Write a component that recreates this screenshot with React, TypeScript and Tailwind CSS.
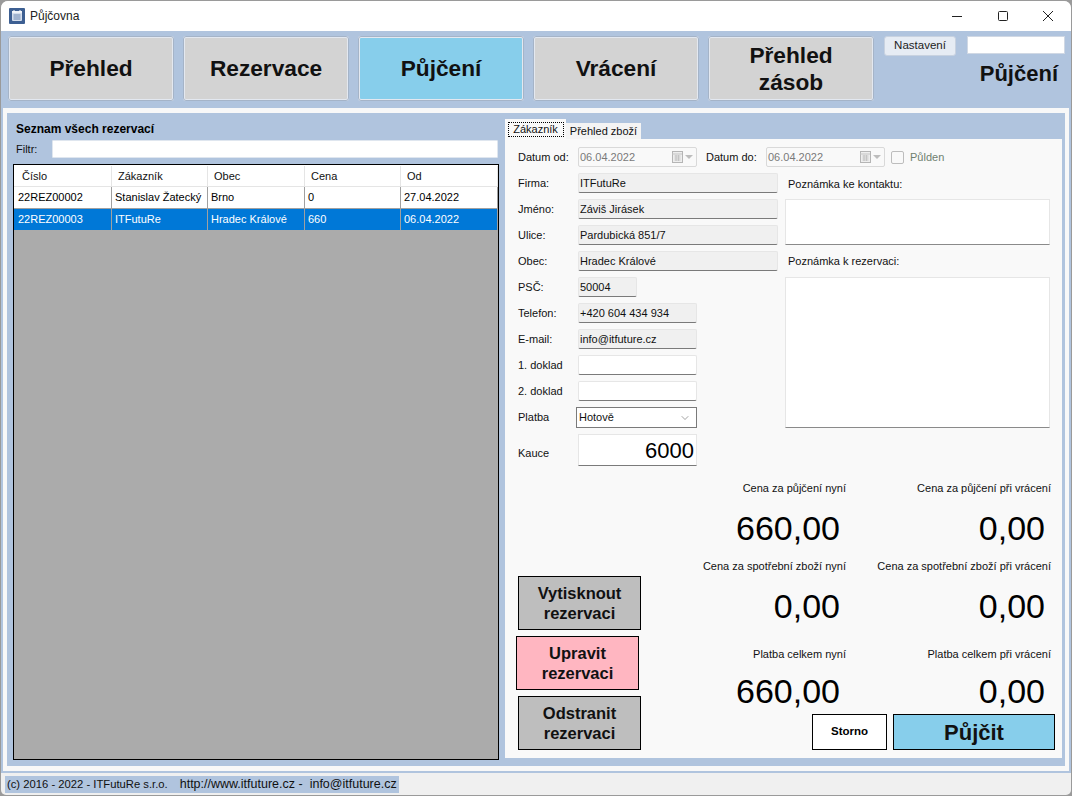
import { ChevronDown } from "lucide-react";

const font = "font-['Liberation_Sans',Arial,sans-serif]";

const navItems = [
  { label: "Přehled" },
  { label: "Rezervace" },
  { label: "Půjčení", active: true },
  { label: "Vrácení" },
  { label: "Přehled zásob" },
];

const columns = ["Číslo", "Zákazník", "Obec", "Cena", "Od"];

const rows = [
  ["22REZ00002", "Stanislav Žatecký", "Brno", "0", "27.04.2022"],
  ["22REZ00003", "ITFutuRe", "Hradec Králové", "660", "06.04.2022"],
];

function CalendarGlyph() {
  return (
    <svg width="24" height="12" viewBox="0 0 24 12" fill="none">
      <rect x="0.5" y="0.5" width="10" height="11" fill="#eeeeee" stroke="#b5b5b5" />
      <path d="M0 3h10M2.500 5h6M2.500 7h6M2.500 9h6M4 4v6M6.500 4v6" stroke="#c4c4c4" />
      <path d="M13 4h8l-4 4z" fill="#bdbdbd" />
    </svg>
  );
}

function DateBox({ value }: { value: string }) {
  return (
    <div className="flex h-5 w-[119px] items-center justify-between rounded-[2px] border border-[#d9d9d9] bg-[#f9f9f9] pl-px text-[#7a7a7a]">
      <span className="pt-px">{value}</span>
      <CalendarGlyph />
    </div>
  );
}

function Field({
  label,
  value,
  width,
  readOnly = true,
}: {
  label: string;
  value?: string;
  width: string;
  readOnly?: boolean;
}) {
  return (
    <div className="flex h-5 items-center">
      <span className="w-[60px] pt-px">{label}</span>
      <div
        className={`flex h-5 items-center rounded-[2px] border border-[#e6e6e6] border-b-[#7a7a7a] pl-px pt-px ${width} ${
          readOnly ? "bg-[#f0f0f0]" : "bg-white"
        }`}
      >
        {value}
      </div>
    </div>
  );
}

function ActionButton({ top, bottom, className }: { top: string; bottom: string; className: string }) {
  return (
    <button className={`flex h-[54px] w-[123px] flex-col items-center justify-center border border-black text-[16.5px] font-bold leading-[20px] text-[#111] ${className}`}>
      <span>{top}</span>
      <span>{bottom}</span>
    </button>
  );
}

function Price({ label, value, valueClass }: { label: string; value: string; valueClass: string }) {
  return (
    <div className="flex flex-col items-end">
      <span className="flex h-5 items-center">{label}</span>
      <span className={`pr-[6px] text-[34px] leading-[40px] text-black ${valueClass}`}>{value}</span>
    </div>
  );
}

export default function App() {
  return (
    <div className={`${font} h-[796px] w-[1072px] overflow-hidden bg-[#9a9a9a] px-px pt-px text-[11px] text-[#111]`}>
      <div className="flex h-[794px] flex-col overflow-hidden rounded-t-[7px] rounded-b-[5px] bg-[#f0f0f0]">
        {/* title bar */}
        <div className="flex h-[30px] shrink-0 items-center bg-white pl-2">
          <svg width="16" height="16" viewBox="0 0 16 16" fill="none">
            <rect width="16" height="16" rx="1" fill="#3d5f92" />
            <rect x="3" y="3" width="10" height="10" rx="1" fill="#d5deec" />
            <path d="M3 3h10v2H3z" fill="#eef2f8" />
            <path d="M4.500 7h7M4.500 9h7M4.500 11h7" stroke="#6d88b2" />
            <path d="M5 2v2M11 2v2" stroke="#ffffff" />
          </svg>
          <span className="ml-[5px] text-[12px] text-[#222]">Půjčovna</span>
          <div className="ml-auto flex items-center pr-[17px]">
            <svg width="12" height="12" viewBox="0 0 12 12" fill="none" className="mr-[34px]">
              <path d="M1 6.500h10" stroke="#222" />
            </svg>
            <svg width="12" height="12" viewBox="0 0 12 12" fill="none" className="mr-[33px]">
              <rect x="1.500" y="1.500" width="9" height="9" rx="1" stroke="#222" />
            </svg>
            <svg width="12" height="12" viewBox="0 0 12 12" fill="none">
              <path d="M1 1l10 10M11 1L1 11" stroke="#222" />
            </svg>
          </div>
        </div>

        {/* top navigation */}
        <div className="flex h-[77px] shrink-0 bg-[#b0c4de] pl-[7px] pt-[5px]">
          <div className="flex gap-[9px]">
            {navItems.map((item) => (
              <button
                key={item.label}
                className={`flex h-[65px] w-[166px] items-center justify-center rounded-[3px] border-2 border-[#e3e8f0] px-8 text-[22.7px] font-bold leading-[27px] text-[#111] outline outline-1 outline-[#a5b4c8] -outline-offset-1 ${
                  item.active ? "bg-[#87ceeb]" : "bg-[#d3d3d3]"
                }`}
              >
                {item.label}
              </button>
            ))}
          </div>
          <div className="ml-[10px] flex flex-col">
            <div className="flex items-start">
              <button className="flex h-5 w-[72px] items-center justify-center rounded-[3px] border border-[#c8d2e0] bg-[#e6ecf4] text-[11.5px] text-[#222]">
                Nastavení
              </button>
              <div className="ml-[11px] h-[18px] w-[98px] border border-[#d0d8e4] bg-white" />
            </div>
            <div className="mt-[5px] self-end pr-[7px] text-[22px] font-bold leading-[26px] text-[#111]">Půjčení</div>
          </div>
        </div>

        {/* main */}
        <div className="shrink-0 bg-[#b0c4de] px-[2px] pb-[2px]">
          <div className="bg-[#f8f8f8] pb-[5px] pl-[4px] pt-[5px]">
            <div className="flex h-[653px] w-[1058px] bg-[#b0c4de]">
              {/* reservations list */}
              <div className="flex w-[498px] shrink-0 flex-col pl-[6px]">
                <div className="flex h-[27px] items-end pb-[2px] pl-[3px] text-[12px] font-bold text-black">
                  Seznam všech rezervací
                </div>
                <div className="flex h-[18px] items-center">
                  <span className="w-[39px] pl-[3px]">Filtr:</span>
                  <div className="h-[18px] w-[446px] rounded-[1px] border border-[#dfe6ef] bg-white" />
                </div>
                <div className="mt-[6px] h-[596px] w-[486px] border border-black bg-[#ababab]">
                  <div className="grid h-[21px] grid-cols-[98px_96px_97px_96px_97px] bg-white pt-px">
                    {columns.map((c) => (
                      <div key={c} className="flex items-center border-r border-[#e5e5e5] pl-[6px] first:pl-2">
                        {c}
                      </div>
                    ))}
                  </div>
                  {rows.map((row, i) => (
                    <div
                      key={row[0]}
                      className={`grid h-[22px] grid-cols-[98px_96px_97px_96px_97px] border-t ${
                        i === 1 ? "border-[#a0a0a0] bg-[#0078d7] text-white" : "border-[#e5e5e5] bg-white text-black"
                      }`}
                    >
                      {row.map((cell) => (
                        <div key={cell} className="flex items-center whitespace-nowrap border-r border-[#a0a0a0] pl-[3px] first:pl-1">
                          {cell}
                        </div>
                      ))}
                    </div>
                  ))}
                </div>
              </div>

              {/* customer tab */}
              <div className="flex w-[557px] shrink-0 flex-col pt-[6px]">
                <div className="flex h-5 items-end">
                  <div className="flex h-5 w-[61px] items-center justify-center bg-[#f9f9f9] pt-px">
                    <span className="flex h-[15px] w-[56px] items-center justify-center border border-dotted border-black">Zákazník</span>
                  </div>
                  <div className="flex h-4 w-[75px] items-center justify-center bg-[#f4f4f4]">Přehled zboží</div>
                </div>
                <div className="h-[619px] bg-[#f9f9f9] pl-[13px] pt-2">
                  <div className="flex h-5 items-center">
                    <span className="w-[60px] pt-px">Datum od:</span>
                    <DateBox value="06.04.2022" />
                    <span className="ml-[9px] w-[60px] pt-px">Datum do:</span>
                    <DateBox value="06.04.2022" />
                    <span className="ml-[6px] h-[13px] w-[13px] rounded-[2px] border border-[#bdbdbd] bg-[#f9f9f9]" />
                    <span className="ml-[6px] pt-px text-[#6f7f6f]">Půlden</span>
                  </div>

                  <div className="mt-[6px] flex">
                    <div className="flex w-[260px] flex-col gap-[6px]">
                      <Field label="Firma:" value="ITFutuRe" width="w-[200px]" />
                      <Field label="Jméno:" value="Záviš Jirásek" width="w-[200px]" />
                      <Field label="Ulice:" value="Pardubická 851/7" width="w-[200px]" />
                      <Field label="Obec:" value="Hradec Králové" width="w-[200px]" />
                      <Field label="PSČ:" value="50004" width="w-[59px]" />
                      <Field label="Telefon:" value="+420 604 434 934" width="w-[119px]" />
                      <Field label="E-mail:" value="info@itfuture.cz" width="w-[119px]" />
                      <Field label="1. doklad" width="w-[119px]" readOnly={false} />
                      <Field label="2. doklad" width="w-[119px]" readOnly={false} />
                      <div className="flex h-[21px] items-center">
                        <span className="w-[58px]">Platba</span>
                        <div className="flex h-[21px] w-[121px] items-center justify-between border border-[#7a7a7a] bg-white pl-[2px] pr-[5px]">
                          Hotově
                          <ChevronDown size={12} strokeWidth={1} className="text-[#444]" />
                        </div>
                      </div>
                      <div className="flex h-[32px] items-center">
                        <span className="w-[60px] pt-[7px]">Kauce</span>
                        <div className="flex h-[32px] w-[119px] items-center justify-end border border-[#e6e6e6] border-b-[#7a7a7a] bg-white pr-[2px] text-[22px] text-black">
                          6000
                        </div>
                      </div>
                    </div>

                    <div className="ml-[7px] flex w-[265px] flex-col">
                      <span className="flex h-[26px] items-start pl-[3px] pt-[3px]">Poznámka ke kontaktu:</span>
                      <div className="h-[46px] border border-[#e6e6e6] border-b-[#8a8a8a] bg-white" />
                      <span className="flex h-[32px] items-center pl-[3px]">Poznámka k rezervaci:</span>
                      <div className="h-[151px] border border-[#e6e6e6] border-b-[#8a8a8a] bg-white" />
                    </div>
                  </div>

                  <div className="flex">
                    <div className="flex w-[123px] flex-col pt-[110px]">
                      <ActionButton top="Vytisknout" bottom="rezervaci" className="bg-[#bebebe]" />
                      <ActionButton top="Upravit" bottom="rezervaci" className="-ml-0.5 mt-[6px] bg-[#ffb6c1]" />
                      <ActionButton top="Odstranit" bottom="rezervaci" className="mt-[6px] bg-[#bebebe]" />
                    </div>
                    <div className="flex w-[414px] flex-col pt-3">
                      <div className="grid grid-cols-[205px_205px] grid-rows-[78px_88px_auto]">
                        <Price label="Cena za půjčení nyní" value="660,00" valueClass="mt-[10px]" />
                        <Price label="Cena za půjčení při vrácení" value="0,00" valueClass="mt-[10px]" />
                        <Price label="Cena za spotřební zboží nyní" value="0,00" valueClass="mt-[10px]" />
                        <Price label="Cena za spotřební zboží při vrácení" value="0,00" valueClass="mt-[10px]" />
                        <Price label="Platba celkem nyní" value="660,00" valueClass="mt-[7px]" />
                        <Price label="Platba celkem při vrácení" value="0,00" valueClass="mt-[7px]" />
                      </div>
                      <div className="mt-[3px] flex justify-end gap-[6px]">
                        <button className="h-9 w-[75px] border border-black bg-white text-[11.5px] font-bold text-black">Storno</button>
                        <button className="h-9 w-[162px] border border-black bg-[#87ceeb] text-[22px] font-bold text-[#111]">Půjčit</button>
                      </div>
                    </div>
                  </div>
                </div>
              </div>
            </div>
          </div>
        </div>

        {/* status bar */}
        <div className="mt-[3px] flex h-[17px] shrink-0 items-center">
          <span className="ml-1 flex h-[17px] w-[394px] items-center whitespace-pre bg-[#b0c4de] pl-[2px] text-[12.5px] text-[#111]">
            <span className="text-[11.25px]">(c) 2016 - 2022 - ITFutuRe s.r.o.</span>
            <span className="ml-3">http://www.itfuture.cz -</span>
            <span className="ml-[7px]">info@itfuture.cz</span>
          </span>
        </div>
      </div>
    </div>
  );
}
